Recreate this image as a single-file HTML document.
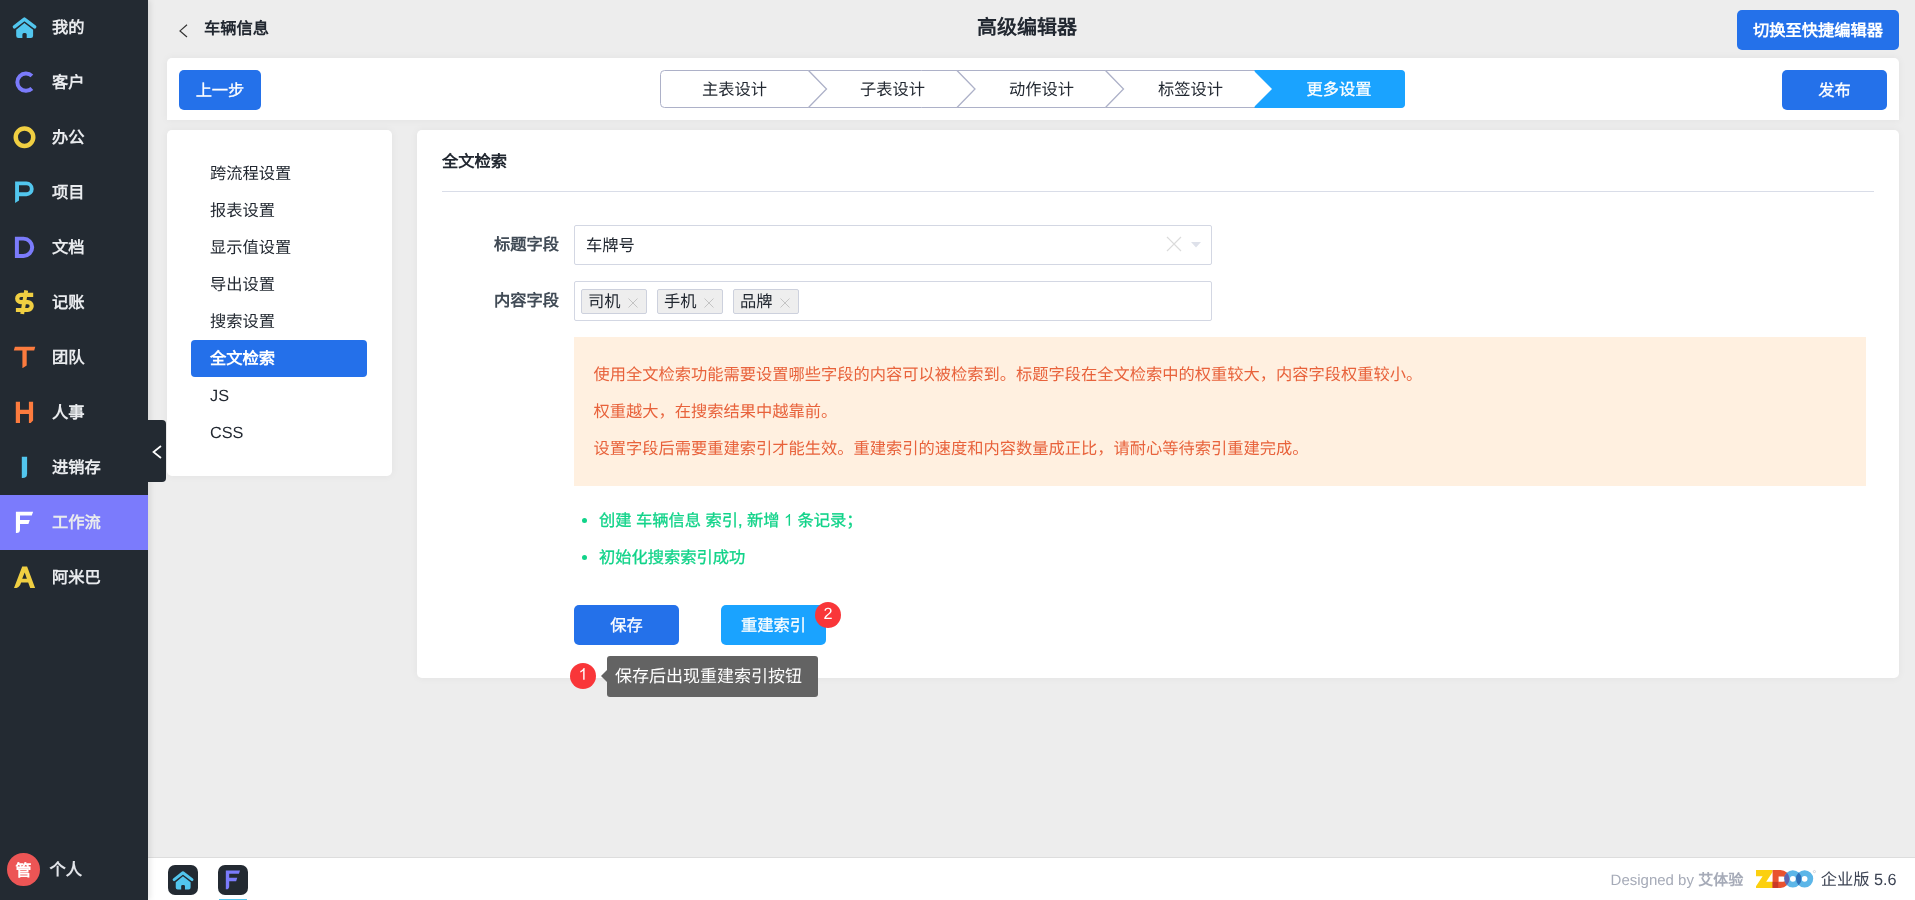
<!DOCTYPE html>
<html lang="zh-CN">
<head>
<meta charset="utf-8">
<title>高级编辑器</title>
<style>
*{box-sizing:border-box;margin:0;padding:0}
html,body{width:1915px;height:900px;overflow:hidden}
body{will-change:transform;text-rendering:geometricPrecision;font-family:"Liberation Sans",sans-serif;font-size:15px;color:#222831;background:#ededed;position:relative}
.abs{position:absolute}
/* sidebar */
#side{position:absolute;left:0;top:0;width:148px;height:900px;background:#232a32;box-shadow:2px 0 6px rgba(0,0,0,.10);z-index:5}
#side .it{position:absolute;left:0;width:148px;height:55px}
#side .it.on{background:#7b7bfc}
#side .it svg{position:absolute;left:4px;top:7px;width:40px;height:40px;overflow:visible}
#side .it span{position:absolute;left:52px;top:0;line-height:57px;font-size:16.25px;font-weight:bold;color:#e9ebee;white-space:nowrap}
#user{position:absolute;left:7px;top:853px;width:32.5px;height:33px;border-radius:50%;background:#ec5555;color:#fff;font-size:16.25px;font-weight:bold;text-align:center;line-height:37.5px}
#uname{position:absolute;left:49.5px;top:853px;line-height:34.5px;font-size:16.25px;font-weight:bold;color:#e3e5ea}
#fold{position:absolute;left:148px;top:420px;width:18px;height:62px;background:#232a32;border-radius:0 4px 4px 0;z-index:6}
/* generic */
.card{position:absolute;background:#fff;border-radius:5px;box-shadow:0 0 8px rgba(0,0,0,.05)}
.btn{position:absolute;background:#2471ea;color:#fff;border-radius:5px;font-size:16.25px;font-weight:bold;text-align:center;white-space:nowrap}
/* left menu */
#lm .mi{position:absolute;left:24px;width:176px;height:37px;line-height:39px;padding-left:19px;font-size:16.25px;color:#222831;border-radius:4px;white-space:nowrap}
#lm .mi.on{background:#2470ea;color:#fff;font-weight:bold}

/* steps */
#steps{position:absolute;left:660px;top:70px;width:745px;height:38px}
.st{position:absolute;top:70px;height:38px;line-height:41px;font-size:16.25px;color:#222831;text-align:center;white-space:nowrap}
/* form */
.lbl{position:absolute;width:100px;text-align:right;font-size:16.25px;font-weight:bold;color:#414b56;line-height:24px;white-space:nowrap}
.box{position:absolute;left:574px;width:638px;height:40px;border:1px solid #d3d7e3;border-radius:2px;background:#fff}
.tag{position:absolute;top:7px;width:66px;height:25px;border:1px solid #cdd1dd;border-radius:2px;background:#eee;font-size:16.25px;color:#222831;line-height:25px;padding-left:6px;white-space:nowrap}
.tag svg{position:absolute;left:46px;top:8px;width:10px;height:10px}
#alert{position:absolute;left:574px;top:337px;width:1292px;height:149px;background:#fff0e0;color:#e8623b;font-size:16.25px;line-height:37px;padding:20px 20px 0 19.5px;white-space:nowrap}
.gl{position:absolute;left:599px;font-size:16.25px;font-weight:500;-webkit-text-stroke:0.3px;color:#11d389;line-height:26px;white-space:nowrap}
.gb{position:absolute;left:581.5px;width:5px;height:5px;border-radius:50%;background:#11d389}
.badge{position:absolute;width:26px;height:26px;border-radius:50%;background:#f93639;color:#fff;font-size:16.25px;line-height:24px;text-align:center}
#tip{position:absolute;left:607px;top:656px;width:211px;height:41px;border-radius:3px;background:#636363;color:#fff;font-size:17px;font-weight:300;line-height:41px;padding-left:8px;white-space:nowrap}
#tip:before{content:"";position:absolute;left:-6px;top:14px;border-style:solid;border-width:6px 6px 6px 0;border-color:transparent #636363 transparent transparent}
/* footer */
#fl{position:absolute;right:18.5px;top:0;height:43px;line-height:44px;font-size:15px;color:#a6abb8;white-space:nowrap}
</style>
</head>
<body>
<!-- SIDEBAR -->
<div id="side">
  <div class="it" style="top:0"><svg viewBox="0 0 40 40" style="top:8px"><path d="M10.4 18.9 L20.4 11.1 L30.7 18.9" fill="none" stroke="#52c6ee" stroke-width="3.4" stroke-linecap="round" stroke-linejoin="round"/><path d="M20.4 15.1 L29.1 21.8 V27.8 Q29.1 30 26.9 30 H22.7 V26.4 Q22.7 24.9 21.2 24.9 H19.9 Q18.4 24.9 18.4 26.4 V30 H14.4 Q12.2 30 12.2 27.8 V21.8 Z" fill="#52c6ee"/></svg><span>我的</span></div>
  <div class="it" style="top:55px"><svg viewBox="0 0 40 40"><path d="M27.9 13.87 A8.65 8.65 0 1 0 27.9 26.53" fill="none" stroke="#7b7bfb" stroke-width="4"/></svg><span>客户</span></div>
  <div class="it" style="top:110px"><svg viewBox="0 0 40 40"><circle cx="20.5" cy="20.2" r="8.75" fill="none" stroke="#f0cf42" stroke-width="4.5"/></svg><span>办公</span></div>
  <div class="it" style="top:165px"><svg viewBox="0 0 40 40"><path fill-rule="evenodd" d="M11.1 9.6 H22.4 A7.3 7.3 0 0 1 22.4 24.2 H15 V28.5 L11.1 31.1 Z M15 13.3 H22.4 A3.45 3.45 0 0 1 22.4 20.2 H15 Z" fill="#52c6ee"/></svg><span>项目</span></div>
  <div class="it" style="top:220px"><svg viewBox="0 0 40 40"><path fill-rule="evenodd" d="M10.9 9.8 H19.65 A10.55 10.55 0 0 1 19.65 30.9 H10.9 Z M14.9 13.4 H19.3 A6.85 6.85 0 0 1 19.3 27.1 H14.9 Z" fill="#7b7bfb"/></svg><span>文档</span></div>
  <div class="it" style="top:275px"><svg viewBox="0 0 40 40"><path d="M29.2 12.8 H16.9 A3.7 3.7 0 0 0 16.9 20.2 H23.8 A3.9 3.9 0 0 1 23.8 28 H11.9" fill="none" stroke="#f0cf42" stroke-width="4.2"/><path d="M22.2 8.4 L18.2 32" stroke="#f0cf42" stroke-width="3.9" stroke-linecap="butt"/></svg><span>记账</span></div>
  <div class="it" style="top:330px"><svg viewBox="0 0 40 40"><path d="M10.9 9.8 H31.3 L30.2 13.6 H22.7 V28.4 L18.8 31.1 H18.4 V13.6 H9.8 Z" fill="#fc7b3e"/></svg><span>团队</span></div>
  <div class="it" style="top:385px"><svg viewBox="0 0 40 40"><path d="M11.8 9.8 H16 V17.8 H24.9 V9.8 H29.1 V28.4 L26.7 31.1 H24.9 V22 H16 V31.1 H11.8 Z" fill="#fc7b3e"/></svg><span>人事</span></div>
  <div class="it" style="top:440px"><svg viewBox="0 0 40 40"><path d="M17.8 9.8 H23.1 V26.5 Q23.1 31.1 18.5 31.1 H17.8 Z" fill="#52c6ee"/></svg><span>进销存</span></div>
  <div class="it on" style="top:495px"><svg viewBox="0 0 40 40"><path d="M11.9 9.8 H29.1 L27.8 13.4 H16 V18 H25.8 L24.4 22 H16 V27.6 Q16 31.1 12.5 31.1 H11.9 Z" fill="#fff"/></svg><span>工作流</span></div>
  <div class="it" style="top:550px"><svg viewBox="0 0 40 40"><path fill-rule="evenodd" d="M18.2 9.6 H23.1 L31.1 30.9 H26.2 L24.2 25.6 H17.1 Q16 30 12.5 30.9 H10 Z M20.7 15.6 L22.9 21.8 H18.2 Z" fill="#f0cf42"/></svg><span>阿米巴</span></div>
  <div id="user">管</div>
  <div id="uname">个人</div>
</div>
<div id="fold"><svg class="abs" style="left:0;top:0;width:18px;height:62px" viewBox="0 0 18 62"><path d="M13 26 L5.5 32 L13 38" fill="none" stroke="#fff" stroke-width="1.7"/></svg></div>

<!-- TOP BAR -->
<svg class="abs" style="left:176px;top:20px;width:16px;height:22px" viewBox="0 0 16 22"><path d="M11 4.7 L4 10.9 L11 17" fill="none" stroke="#333" stroke-width="1.2"/></svg>
<div class="abs" id="back" style="left:204px;top:17px;font-size:16.25px;font-weight:bold;color:#222831;line-height:24px">车辆信息</div>
<div class="abs" id="title" style="left:927px;top:14px;width:200px;text-align:center;font-size:20px;font-weight:bold;color:#222831;line-height:29px">高级编辑器</div>
<div class="btn" id="switch" style="left:1737px;top:10px;width:162px;height:40px;line-height:43px">切换至快捷编辑器</div>

<!-- STEP CARD -->
<div class="card" id="stepcard" style="left:167px;top:58px;width:1732px;height:62px;border-radius:5px 5px 0 0"></div>
<div class="btn" id="prev" style="left:179px;top:70px;width:82px;height:40px;line-height:43px;font-weight:500;-webkit-text-stroke:0.3px">上一步</div>
<div class="btn" id="pub" style="left:1782px;top:70px;width:105px;height:40px;line-height:43px;font-weight:500;-webkit-text-stroke:0.3px">发布</div>


<svg id="steps" viewBox="0 0 745 38">
  <rect x="0.5" y="0.5" width="744" height="37" rx="4" ry="4" fill="#fff" stroke="#adb1c8"/>
  <path d="M594.5 0 H741 a4 4 0 0 1 4 4 V34 a4 4 0 0 1 -4 4 H594.5 Z" fill="#1aa3ff"/>
  <path d="M148.5 0.5 L166.5 19 L148.5 37.5" fill="#fff" stroke="#adb1c8" stroke-width="1.3"/>
  <path d="M297 0.5 L315 19 L297 37.5" fill="#fff" stroke="#adb1c8" stroke-width="1.3"/>
  <path d="M445.5 0.5 L463.5 19 L445.5 37.5" fill="#fff" stroke="#adb1c8" stroke-width="1.3"/>
  <path d="M594 1 L612 19 L594 37 Z" fill="#fff"/>
</svg>
<div class="st" style="left:660px;width:149px">主表设计</div>
<div class="st" style="left:828px;width:129px">子表设计</div>
<div class="st" style="left:977px;width:129px">动作设计</div>
<div class="st" style="left:1126px;width:129px">标签设计</div>
<div class="st" style="left:1274.5px;width:129px;color:#fff;font-weight:500;-webkit-text-stroke:0.3px">更多设置</div>

<!-- LEFT MENU -->
<div class="card" id="lm" style="left:167px;top:130px;width:225px;height:346px">
  <div class="mi" style="top:25px">跨流程设置</div>
  <div class="mi" style="top:62px">报表设置</div>
  <div class="mi" style="top:99px">显示值设置</div>
  <div class="mi" style="top:136px">导出设置</div>
  <div class="mi" style="top:173px">搜索设置</div>
  <div class="mi on" style="top:210px">全文检索</div>
  <div class="mi" style="top:247px">JS</div>
  <div class="mi" style="top:284px">CSS</div>
</div>

<!-- MAIN CARD -->
<div class="card" id="main" style="left:417px;top:130px;width:1482px;height:548px"></div>


<div class="abs" id="mtitle" style="left:442px;top:150px;font-size:16.25px;font-weight:bold;color:#222831;line-height:24px">全文检索</div>
<div class="abs" style="left:442px;top:191px;width:1432px;height:1px;background:#d9dde8"></div>
<div class="lbl" style="left:459px;top:233px">标题字段</div>
<div class="box" style="top:225px"><div class="abs" style="left:11px;top:0;line-height:40px;font-size:16.25px;color:#222831">车牌号</div>
  <svg class="abs" style="left:591px;top:10px;width:16px;height:16px" viewBox="0 0 16 16"><path d="M1 1 L15 15 M15 1 L1 15" stroke="#dbdbdb" stroke-width="1.2" fill="none"/></svg>
  <svg class="abs" style="left:616px;top:16px;width:10px;height:6px" viewBox="0 0 10 6"><path d="M0 0 H10 L5 5.5 Z" fill="#dee1ea"/></svg>
</div>
<div class="lbl" style="left:459px;top:289px">内容字段</div>
<div class="box" style="top:281px">
  <div class="tag" style="left:6px">司机<svg viewBox="0 0 10 10"><path d="M0.5 0.5 L9.5 9.5 M9.5 0.5 L0.5 9.5" stroke="#c4c4c4" stroke-width="1" fill="none"/></svg></div>
  <div class="tag" style="left:82px">手机<svg viewBox="0 0 10 10"><path d="M0.5 0.5 L9.5 9.5 M9.5 0.5 L0.5 9.5" stroke="#c4c4c4" stroke-width="1" fill="none"/></svg></div>
  <div class="tag" style="left:158px">品牌<svg viewBox="0 0 10 10"><path d="M0.5 0.5 L9.5 9.5 M9.5 0.5 L0.5 9.5" stroke="#c4c4c4" stroke-width="1" fill="none"/></svg></div>
</div>
<div id="alert">使用全文检索功能需要设置哪些字段的内容可以被检索到。标题字段在全文检索中的权重较大，内容字段权重较小。<br>权重越大，在搜索结果中越靠前。<br>设置字段后需要重建索引才能生效。重建索引的速度和内容数量成正比，请耐心等待索引重建完成。</div>
<div class="gb" style="top:518px"></div><div class="gl" style="top:508px">创建 车辆信息 索引, 新增 <svg style="display:inline-block;width:9.04px;height:11.68px;vertical-align:baseline;overflow:visible" viewBox="0 0 1139 1472"><path transform="translate(0,1472) scale(1,-1)" d="M763 0 H583 V1147 Q518 1085 412.5 1023 Q307 961 223 930 V1104 Q374 1175 487 1276 Q600 1377 647 1472 H763 Z" fill="currentColor"/></svg> 条记录；</div>
<div class="gb" style="top:555px"></div><div class="gl" style="top:545px">初始化搜索索引成功</div>
<div class="btn" style="left:574px;top:605px;width:105px;height:40px;line-height:43px;font-weight:500;-webkit-text-stroke:0.3px">保存</div>
<div class="btn" style="left:721px;top:605px;width:105px;height:40px;line-height:43px;font-weight:500;-webkit-text-stroke:0.3px;background:#1aa3ff">重建索引</div>
<div class="badge" style="left:815px;top:602px">2</div>
<div class="badge" style="left:570px;top:663px"><svg style="position:absolute;left:0;top:0;width:26px;height:26px" viewBox="0 0 26 26"><path transform="translate(8.55,16.8) scale(0.007935,-0.007935)" d="M763 0 H583 V1147 Q518 1085 412.5 1023 Q307 961 223 930 V1104 Q374 1175 487 1276 Q600 1377 647 1472 H763 Z" fill="#fff"/></svg></div>
<div id="tip">保存后出现重建索引按钮</div>

<!-- FOOTER -->
<div class="abs" id="foot" style="left:148px;top:857px;width:1767px;height:43px;background:#fff;border-top:1px solid #ddd">
  <div class="abs" style="left:20px;top:7px;width:30px;height:30px;border-radius:7px;background:#232a32"><svg class="abs" style="left:-3.5px;top:-2.4px;width:35.2px;height:35.2px" viewBox="0 0 40 40"><path d="M10.4 18.9 L20.4 11.1 L30.7 18.9" fill="none" stroke="#52c6ee" stroke-width="3.4" stroke-linecap="round" stroke-linejoin="round"/><path d="M20.4 15.1 L29.1 21.8 V27.8 Q29.1 30 26.9 30 H22.7 V26.4 Q22.7 24.9 21.2 24.9 H19.9 Q18.4 24.9 18.4 26.4 V30 H14.4 Q12.2 30 12.2 27.8 V21.8 Z" fill="#52c6ee"/></svg></div>
  <div class="abs" style="left:70px;top:7px;width:30px;height:30px;border-radius:7px;background:#232a32"><svg class="abs" style="left:-2.1px;top:-2.7px;width:33px;height:35.2px" viewBox="0 0 40 40" preserveAspectRatio="none"><path d="M11.9 9.8 H29.1 L27.8 13.4 H16 V18 H25.8 L24.4 22 H16 V27.6 Q16 31.1 12.5 31.1 H11.9 Z" fill="#7b7bfb"/></svg></div>
  <div class="abs" style="left:71px;top:40.5px;width:28px;height:3px;background:#52c6ee"></div>
  <svg class="abs" style="left:1602px;top:6px;width:72px;height:30px" viewBox="0 0 72 30">
    <defs><clipPath id="o1c"><circle cx="42.86" cy="14.85" r="8.62"/></clipPath></defs>
    <path d="M6 6 H22.6 V8.1 L16.2 17.7 H28.2 V23.9 H6 V22.2 L12.6 12.2 H6 Z" fill="#fcd00f"/>
    <path fill-rule="evenodd" d="M22.6 6 H30.5 A8.95 8.95 0 0 1 30.5 23.9 H22.6 Z M28.6 12.4 H33 A2.65 2.65 0 0 1 33 17.7 H28.6 Z" fill="#e95230"/>
    <path d="M22.6 17.9 H28.2 V23.9 H22.6 Z" fill="#c93a27"/>
    <circle cx="42.86" cy="14.85" r="5.76" fill="none" stroke="#5cb6e8" stroke-width="5.72"/>
    <circle cx="54.6" cy="14.85" r="5.76" fill="none" stroke="#5cb6e8" stroke-width="5.72"/>
    <g clip-path="url(#o1c)">
      <path d="M22.6 6 H30.5 A8.95 8.95 0 0 1 30.5 23.9 H22.6 Z" fill="#5f64b0"/>
      <circle cx="54.6" cy="14.85" r="5.76" fill="none" stroke="#2f70b9" stroke-width="5.72"/>
    </g>
    <circle cx="64.4" cy="7.6" r="1.1" fill="none" stroke="#b8bcc8" stroke-width="0.6"/>
  </svg>
  <div id="fl">Designed by <b>艾体验</b><span style="display:inline-block;width:77.5px"></span><span style="font-size:16.25px;color:#3c4353">企业版 5.6</span></div>
</div>
</body>
</html>
